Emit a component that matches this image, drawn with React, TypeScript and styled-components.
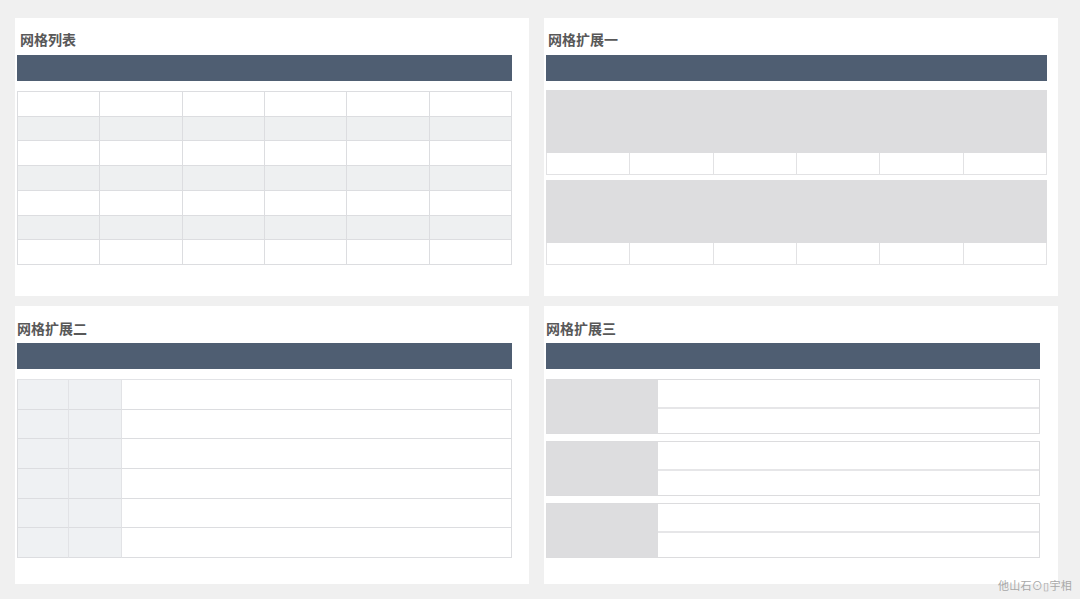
import React from 'react';
import styled, { createGlobalStyle } from 'styled-components';

const GlobalStyle = createGlobalStyle`
    html, body {
        margin: 0;
        padding: 0;
        background: #f0f0f0;
    }
    * {
        box-sizing: border-box;
    }
`;

const Page = styled.div`
    position: relative;
    width: 1080px;
    height: 599px;
    padding: 18px 0 0 15px;
    display: grid;
    grid-template-columns: 514px 514px;
    grid-template-rows: 278px 278px;
    column-gap: 15px;
    row-gap: 10px;
    align-content: start;
    font-family: 'Noto Sans CJK SC', 'Noto Sans', sans-serif;
`;

const Panel = styled.section<{ $top: number; $right: number }>`
    background: #ffffff;
    padding: ${(p) => p.$top}px ${(p) => p.$right}px 0 2px;
    display: flex;
    flex-direction: column;
`;

const Title = styled.h2<{ $indent: number; $gap: number }>`
    margin: 0 0 ${(p) => p.$gap}px;
    padding-left: ${(p) => p.$indent}px;
    font-size: 14px;
    line-height: 20px;
    height: 20px;
    font-weight: 700;
    color: #585858;
`;

const HeaderBar = styled.div`
    height: 26px;
    background: #4f5e72;
`;

const Body = styled.div<{ $gap: number }>`
    margin-top: ${(p) => p.$gap}px;
    display: flex;
    flex-direction: column;
`;

/* 网格列表 */
const StripedGrid = styled.div`
    display: grid;
    grid-template-columns: repeat(6, 1fr);
    grid-template-rows: repeat(7, 1fr);
    height: 174px;
    border-top: 1px solid #dcdde0;
    border-left: 1px solid #dcdde0;
`;

const StripedCell = styled.div<{ $alt: boolean }>`
    background: ${(p) => (p.$alt ? '#eef0f1' : '#ffffff')};
    border-right: 1px solid #dcdde0;
    border-bottom: 1px solid #dcdde0;
`;

/* 网格扩展一 */
const MediaBlock = styled.div`
    display: flex;
    flex-direction: column;
    & + & {
        margin-top: 5px;
    }
`;

const MediaArea = styled.div`
    height: 63px;
    background: #dddddf;
`;

const MediaCells = styled.div`
    display: grid;
    grid-template-columns: repeat(6, 1fr);
    height: 22px;
    border-left: 1px solid #e2e2e4;
`;

const MediaCell = styled.div`
    border-right: 1px solid #e2e2e4;
    border-bottom: 1px solid #e2e2e4;
`;

/* 网格扩展二 */
const SideGrid = styled.div`
    display: grid;
    grid-template-columns: 51px 53px 1fr;
    grid-template-rows: repeat(6, 1fr);
    height: 179px;
    border-top: 1px solid #e2e3e6;
    border-left: 1px solid #dcdde0;
`;

const SideCell = styled.div<{ $shaded: boolean }>`
    background: ${(p) => (p.$shaded ? '#eff1f3' : '#ffffff')};
    border-right: 1px solid ${(p) => (p.$shaded ? '#e2e3e6' : '#dcdde0')};
    border-bottom: 1px solid #dcdde0;
`;

/* 网格扩展三 */
const CardList = styled.div`
    display: flex;
    flex-direction: column;
    gap: 7px;
`;

const Card = styled.div`
    display: grid;
    grid-template-columns: 111px 1fr;
    height: 55px;
    border: 1px solid #dcdcde;
`;

const CardThumb = styled.div`
    background: #dddddf;
`;

const CardLines = styled.div`
    display: grid;
    grid-template-rows: 1fr 1fr;
`;

const CardLine = styled.div`
    & + & {
        border-top: 2px solid #e6e6e8;
    }
`;

const Watermark = styled.span`
    position: absolute;
    right: 8px;
    bottom: 6px;
    font-size: 11px;
    letter-spacing: 0.3px;
    color: #a8a8a8;
`;

const App = () => {
    const rows7 = Array.from({ length: 7 });
    const rows6 = Array.from({ length: 6 });
    const cols6 = Array.from({ length: 6 });

    return (
        <>
            <GlobalStyle />
            <Page>
                <Panel $top={11} $right={17}>
                    <Title $indent={3} $gap={6}>网格列表</Title>
                    <HeaderBar />
                    <Body $gap={10}>
                        <StripedGrid>
                            {rows7.map((_, r) =>
                                cols6.map((__, c) => <StripedCell key={`${r}-${c}`} $alt={r % 2 === 1} />)
                            )}
                        </StripedGrid>
                    </Body>
                </Panel>

                <Panel $top={11} $right={11}>
                    <Title $indent={2} $gap={6}>网格扩展一</Title>
                    <HeaderBar />
                    <Body $gap={9}>
                        {[0, 1].map((b) => (
                            <MediaBlock key={b}>
                                <MediaArea />
                                <MediaCells>
                                    {cols6.map((_, c) => (
                                        <MediaCell key={c} />
                                    ))}
                                </MediaCells>
                            </MediaBlock>
                        ))}
                    </Body>
                </Panel>

                <Panel $top={12} $right={17}>
                    <Title $indent={0} $gap={5}>网格扩展二</Title>
                    <HeaderBar />
                    <Body $gap={10}>
                        <SideGrid>
                            {rows6.map((_, r) =>
                                [0, 1, 2].map((c) => <SideCell key={`${r}-${c}`} $shaded={c < 2} />)
                            )}
                        </SideGrid>
                    </Body>
                </Panel>

                <Panel $top={12} $right={18}>
                    <Title $indent={0} $gap={5}>网格扩展三</Title>
                    <HeaderBar />
                    <Body $gap={10}>
                        <CardList>
                            {[0, 1, 2].map((i) => (
                                <Card key={i}>
                                    <CardThumb />
                                    <CardLines>
                                        <CardLine />
                                        <CardLine />
                                    </CardLines>
                                </Card>
                            ))}
                        </CardList>
                    </Body>
                </Panel>

                <Watermark>他山石⊙▯宇相</Watermark>
            </Page>
        </>
    );
};

export default App;
